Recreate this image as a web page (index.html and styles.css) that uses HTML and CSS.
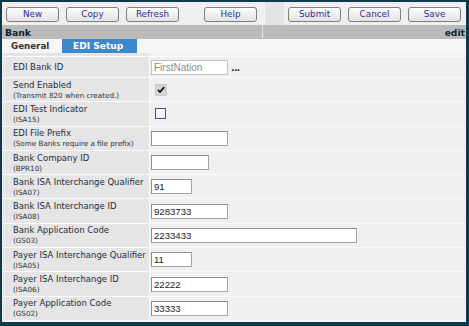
FILE: index.html
```html
<!DOCTYPE html>
<html>
<head>
<meta charset="utf-8">
<link rel="stylesheet" href="styles.css">
</head>
<body>
<div class="frame">
  <div class="toolbar">
    <div class="group left">
      <button class="btn">New</button>
      <button class="btn">Copy</button>
      <button class="btn">Refresh</button>
      <button class="btn help">Help</button>
    </div>
    <div class="spacer-cell"></div>
    <div class="group right">
      <button class="btn">Submit</button>
      <button class="btn">Cancel</button>
      <button class="btn">Save</button>
    </div>
  </div>
  <div class="header">
    <div class="title">Bank</div>
    <div class="mode">edit</div>
  </div>
  <div class="tabs">
    <div class="tab">General</div>
    <div class="tab active">EDI Setup</div>
  </div>
  <div class="form">
    <div class="lbl pad"></div><div class="val pad"></div>

    <div class="lbl"><span class="main">EDI Bank ID</span></div>
    <div class="val"><span class="input ro w77">FirstNation</span><span class="dots">...</span></div>

    <div class="lbl"><span class="main">Send Enabled</span><span class="sub">(Transmit 820 when created.)</span></div>
    <div class="val"><span class="check on"><svg viewBox="0 0 10 10" width="10" height="10"><path d="M2 4.8 L4 7 L8.2 2.2" fill="none" stroke="#111" stroke-width="1.8"/></svg></span></div>

    <div class="lbl"><span class="main">EDI Test Indicator</span><span class="sub">(ISA15)</span></div>
    <div class="val"><span class="check off"></span></div>

    <div class="lbl"><span class="main">EDI File Prefix</span><span class="sub">(Some Banks require a file prefix)</span></div>
    <div class="val"><span class="input w77"></span></div>

    <div class="lbl"><span class="main">Bank Company ID</span><span class="sub">(BPR10)</span></div>
    <div class="val"><span class="input w58"></span></div>

    <div class="lbl"><span class="main">Bank ISA Interchange Qualifier</span><span class="sub">(ISA07)</span></div>
    <div class="val"><span class="input w41">91</span></div>

    <div class="lbl"><span class="main">Bank ISA Interchange ID</span><span class="sub">(ISA08)</span></div>
    <div class="val"><span class="input w77">9283733</span></div>

    <div class="lbl"><span class="main">Bank Application Code</span><span class="sub">(GS03)</span></div>
    <div class="val"><span class="input w206">2233433</span></div>

    <div class="lbl"><span class="main">Payer ISA Interchange Qualifier</span><span class="sub">(ISA05)</span></div>
    <div class="val"><span class="input w41">11</span></div>

    <div class="lbl"><span class="main">Payer ISA Interchange ID</span><span class="sub">(ISA06)</span></div>
    <div class="val"><span class="input w77">22222</span></div>

    <div class="lbl"><span class="main">Payer Application Code</span><span class="sub">(GS02)</span></div>
    <div class="val"><span class="input w77">33333</span></div>
  </div>
</div>
</body>
</html>
```
FILE: styles.css
```css
* { box-sizing: border-box; }
html, body { margin: 0; padding: 0; }
body {
  background: #0d3a4c;
  width: 469px;
  height: 326px;
  overflow: hidden;
  font-family: "DejaVu Sans", Verdana, sans-serif;
}
.frame {
  margin: 2px 3px 0 2px;
  width: 464px;
  height: 320px;
  background: #f0f0f0;
  display: flex;
  flex-direction: column;
}
.toolbar {
  height: 23px;
  background: #efefef;
  display: flex;
  align-items: stretch;
}
.group {
  display: flex;
  align-items: center;
  gap: 7px;
}
.group.left { padding-left: 4px; width: 262px; }
.group.left .help { margin-left: 18px; }
.group.right { padding-left: 4px; gap: 7px; }
.spacer-cell {
  width: 20px;
  background: #e4e4e4;
  border-left: 1px solid #f6f6f6;
}
.btn {
  width: 53px;
  height: 15px;
  padding: 0;
  margin-top: 1px;
  border: 1px solid #7d7d7d;
  border-radius: 3px;
  background: linear-gradient(#fdfdfd, #e2e2e2);
  color: #2c2c8c;
  font-family: "DejaVu Sans", Verdana, sans-serif;
  font-size: 8.8px;
  line-height: 13px;
  text-align: center;
}
.header {
  height: 14px;
  background: #bababa;
  display: flex;
  align-items: center;
  font-weight: bold;
  font-size: 9.2px;
  color: #0e2231;
}
.title {
  width: 261px;
  padding-left: 3px;
  height: 100%;
  display: flex;
  align-items: center;
  border-right: 1px solid #e6e6e6;
}
.mode { flex: 1; text-align: right; padding-right: 1px; }
.tabs {
  height: 14px;
  background: #f6f6f6;
  display: flex;
  align-items: stretch;
  padding-left: 2px;
}
.tab {
  font-weight: bold;
  font-size: 8.7px;
  color: #333;
  display: flex;
  align-items: center;
  padding-left: 7px;
  width: 58px;
}
.tab.active {
  background: #3d87ca;
  color: #fff;
  width: 75px;
  padding-left: 11px;
  font-size: 9.1px;
}
.form {
  flex: 1;
  display: grid;
  grid-template-columns: 146px 1fr;
  grid-template-rows: 3px 20px repeat(10, 23.3px);
  column-gap: 1px;
  row-gap: 1px;
  background: #fafafa;
  margin-left: 1px;
}
.lbl {
  background: #e5e5e5;
  display: flex;
  flex-direction: column;
  justify-content: center;
  padding-left: 10px;
  color: #1d2d3d;
  white-space: nowrap;
}
.val {
  background: #f0f0f0;
  display: flex;
  align-items: center;
  padding-left: 1px;
}
.main { font-size: 8.5px; line-height: 10px; }
.sub { font-size: 7.2px; line-height: 9px; color: #2a3440; margin-top: 1px; }
.input {
  display: inline-block;
  height: 15px;
  background: #fff;
  border: 1px solid #a4a4a4;
  border-top-color: #8c8c8c;
  border-left-color: #8c8c8c;
  font-family: "Liberation Sans", Arial, sans-serif;
  font-size: 9.6px;
  line-height: 13px;
  padding-left: 2px;
  color: #1a1a2a;
}
.input.ro { border-color: #c2c2c2; color: #8a8a8a; font-size: 10px; }
.w41 { width: 41px; }
.w58 { width: 58px; }
.w77 { width: 77px; }
.w206 { width: 206px; }
.dots {
  font-weight: bold;
  font-size: 9px;
  margin-left: 3px;
  margin-top: 1px;
  color: #222;
  letter-spacing: -0.5px;
}
.check {
  display: inline-flex;
  align-items: center;
  justify-content: center;
}
.check.on {
  width: 12px;
  height: 12px;
  margin-left: 4px;
  background: #d6d6d6;
  border: 1px solid #c8c8c8;
}
.check.off {
  width: 11px;
  height: 11px;
  margin-left: 4px;
  border: 1px solid #3d5878;
  background: #f4f6fa;
}
```
